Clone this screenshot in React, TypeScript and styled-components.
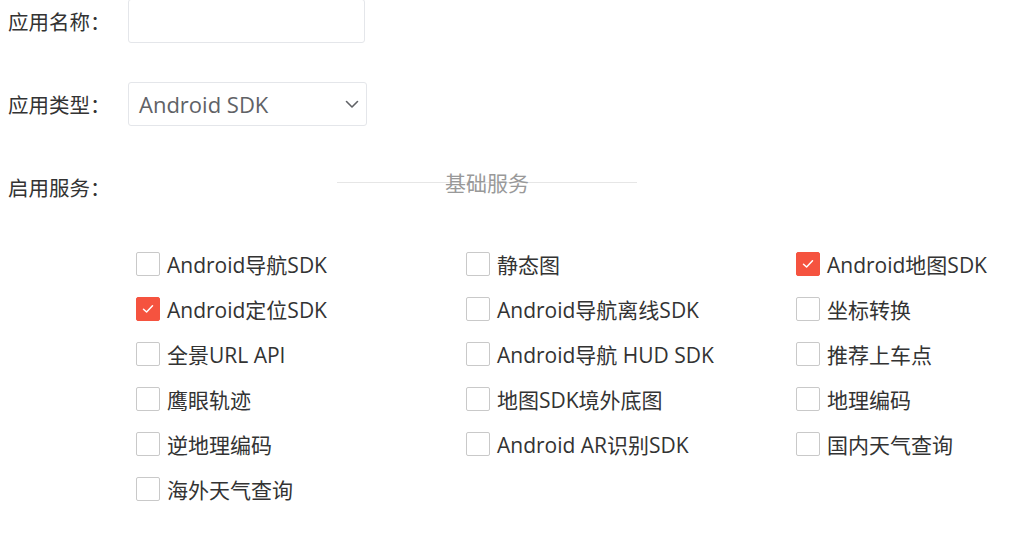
import React from 'react';
import styled, { createGlobalStyle } from 'styled-components';

const GlobalStyle = createGlobalStyle`
  html, body {
    margin: 0;
    padding: 0;
    background: #ffffff;
  }
  body {
    font-family: "Open Sans", "Noto Sans CJK SC", sans-serif;
    color: #333333;
    overflow: hidden;
  }
`;

const Page = styled.div`
  padding: 0 8px;
  margin-top: -1px;
`;

const FormItem = styled.div<{ gap?: number }>`
  display: flex;
  align-items: flex-start;
  margin-bottom: ${props => props.gap ?? 0}px;
`;

const Label = styled.div`
  width: 120px;
  flex-shrink: 0;
  height: 44px;
  line-height: 44px;
  font-size: 20.5px;
  color: #333333;
  font-family: "Noto Sans CJK SC", sans-serif;
`;

const TextInput = styled.div`
  width: 237px;
  height: 44px;
  box-sizing: border-box;
  border: 1px solid #e4e6ea;
  border-radius: 3px;
`;

const Select = styled.div`
  width: 239px;
  height: 44px;
  box-sizing: border-box;
  border: 1px solid #e4e6ea;
  border-radius: 3px;
  display: flex;
  align-items: center;
  justify-content: space-between;
  padding: 0 7px 0 10px;
  font-size: 22px;
  color: #606266;
`;

const Content = styled.div`
  display: flex;
  flex-direction: column;
`;

const Divider = styled.div`
  width: 300px;
  height: 34px;
  margin-left: 209px;
  display: flex;
  align-items: center;
  justify-content: center;
  background: linear-gradient(#e6e6e6, #e6e6e6) no-repeat center / 100% 1px;
  font-family: "Noto Sans CJK SC", sans-serif;
  font-size: 21px;
  color: #999999;
`;

const ServiceGrid = styled.div`
  display: grid;
  grid-template-columns: 330px 330px 1fr;
  grid-auto-rows: 45px;
  margin: 32px 0 0 128px;
`;

const Option = styled.label`
  display: flex;
  align-items: center;
  gap: 7px;
  font-size: 21px;
  color: #333333;
  white-space: nowrap;
`;

const Box = styled.span<{ checked?: boolean }>`
  width: 24px;
  height: 24px;
  box-sizing: border-box;
  border-radius: 2px;
  border: 1px solid ${props => (props.checked ? '#f5533f' : '#c9c9c9')};
  background: ${props => (props.checked ? '#f5533f' : '#ffffff')};
  display: flex;
  align-items: center;
  justify-content: center;
  flex-shrink: 0;
`;

const services: { name: string; checked?: boolean }[] = [
  { name: 'Android导航SDK' },
  { name: '静态图' },
  { name: 'Android地图SDK', checked: true },
  { name: 'Android定位SDK', checked: true },
  { name: 'Android导航离线SDK' },
  { name: '坐标转换' },
  { name: '全景URL API' },
  { name: 'Android导航 HUD SDK' },
  { name: '推荐上车点' },
  { name: '鹰眼轨迹' },
  { name: '地图SDK境外底图' },
  { name: '地理编码' },
  { name: '逆地理编码' },
  { name: 'Android AR识别SDK' },
  { name: '国内天气查询' },
  { name: '海外天气查询' },
];

const Check = () => (
  <svg width="12" height="10" viewBox="0 0 12 10" fill="none">
    <path d="M1.5 5.2 L4.6 8 L10.5 1.8" stroke="#fff" strokeWidth="1.5" strokeLinecap="round" strokeLinejoin="round" />
  </svg>
);

const Chevron = () => (
  <svg width="14" height="9" viewBox="0 0 14 9" fill="none">
    <path d="M1.5 1.5 L7 7 L12.5 1.5" stroke="#606266" strokeWidth="1.6" strokeLinecap="round" strokeLinejoin="round" />
  </svg>
);

export default function App() {
  return (
    <>
      <GlobalStyle />
      <Page>
        <FormItem gap={39}>
          <Label>应用名称：</Label>
          <TextInput />
        </FormItem>
        <FormItem gap={39}>
          <Label>应用类型：</Label>
          <Select>
            <span>Android SDK</span>
            <Chevron />
          </Select>
        </FormItem>
        <FormItem>
          <Label>启用服务：</Label>
          <Content>
            <Divider>基础服务</Divider>
          </Content>
        </FormItem>
        <ServiceGrid>
          {services.map(s => (
            <Option key={s.name}>
              <Box checked={s.checked}>{s.checked && <Check />}</Box>
              {s.name}
            </Option>
          ))}
        </ServiceGrid>
      </Page>
    </>
  );
}
